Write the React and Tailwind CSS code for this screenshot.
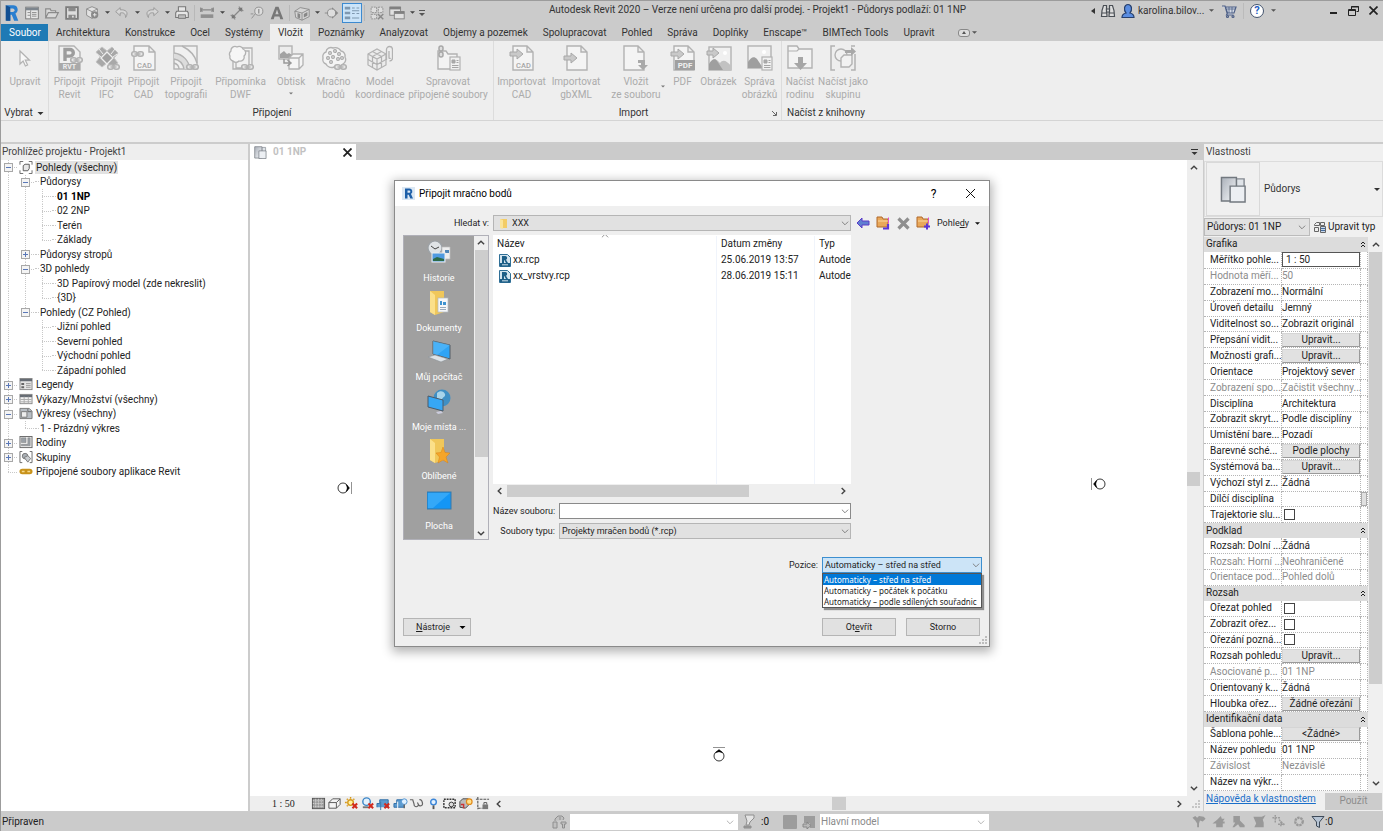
import React from "react";

const G = "#b2b2b2";

function Caret({ className = "w-[10px]", fill = "#555", w = 5 }) {
  return (
    <span className={`flex shrink-0 items-center justify-center ${className}`}>
      <svg width={w} height="3" viewBox="0 0 6 3" fill={fill} aria-hidden="true"><path d="M0 0h6L3 3z" /></svg>
    </span>
  );
}

function Chevron({ dir = "down", size = 8, color = "#444", sw = 1.2 }) {
  const d = { down: "M1 3l3.5 3.5L8 3", up: "M1 6l3.5-3.5L8 6", left: "M6 1L2.500 4.500 6 8", right: "M3 1l3.500 3.500L3 8" }[dir];
  return <svg width={size} height={size} viewBox="0 0 9 9" fill="none" stroke={color} strokeWidth={sw} aria-hidden="true"><path d={d} /></svg>;
}

function Chain({ x, y, c = G, s = 1 }) {
  return (
    <g transform={`translate(${x} ${y}) scale(${s})`} fill="#e6e6e6" stroke={c} strokeWidth="1.6">
      <rect x="0.7" y="0.8" width="5.6" height="4.4" rx="2.2" />
      <rect x="6.7" y="0.8" width="5.6" height="4.4" rx="2.2" />
      <path d="M3.500 3h6" strokeWidth="1.4" />
    </g>
  );
}

function Doc({ x = 5, y = 1, w = 17, h = 24 }) {
  return <path d={`M${x} ${y}h${w - 6}l6 6v${h - 6}h${-w}zM${x + w - 6} ${y}v6h6`} fill="#f4f4f4" stroke={G} strokeWidth="1.4" />;
}

const ARROW = "M1 7h7V4l6 5-6 5v-3H1z";

const ribbonArt = {
  cursor: <path d="M8 6v13l3.100-3 2.300 5 2.200-1-2.300-4.800h4.200z" fill="#f8f8f8" stroke={G} strokeWidth="1.200" />,
  revit: (
    <>
      <path d="M2 1h15l6 6v18H2z" fill="#f0f0f0" stroke={G} strokeWidth="1.400" />
      <path d="M2 18h21v7H2z" fill="#a9a9a9" />
      <path d="M8 16V4.500h5a3.300 3.300 0 0 1 0 6.600H8" fill="none" stroke="#9d9d9d" strokeWidth="3.400" />
      <text x="12.500" y="24.300" fontSize="7" fontWeight="700" fill="#eee" textAnchor="middle">RVT</text>
      <Chain x={13} y={12} />
    </>
  ),
  ifc: (
    <>
      <g fill="#a8a8a8" stroke="#c4c4c4" strokeWidth="1">
        <path d="M8 2l5 4 5-4 6 6-4 5 4 5-6 4-5-4-5 4-6-5 4-5-4-5z" />
        <path d="M13 7l6 6-6 6-6-6z" fill="#a0a0a0" stroke="#eee" strokeWidth="1.300" />
        <path d="M5 4l4 5M3 9l4 3M17 9l4-5M19 12l4-3" stroke="#eee" strokeWidth="1" />
      </g>
      <Chain x={13} y={19} />
    </>
  ),
  cadLink: (
    <>
      <Doc x={3} w={21} />
      <text x="13.500" y="23" fontSize="7.500" fontWeight="500" fill="#a6a6a6" textAnchor="middle">CAD</text>
      <Chain x={0} y={6} />
    </>
  ),
  topo: (
    <>
      <rect x="1" y="1" width="23" height="23" fill="#f0f0f0" stroke={G} strokeWidth="1.400" />
      <path d="M1 8c9 1 15 8 16 16h-6C10 19 7 15 1 14z" fill="#dcdcdc" />
      <path d="M1 8c9 1 15 8 16 16M1 14c6 1 9 5 10 10M9 1c8 4 13 9 15 17M1 18c3 1 5 3 5 6" fill="none" stroke={G} strokeWidth="1.400" />
      <Chain x={13} y={19} />
    </>
  ),
  dwf: (
    <>
      <path d="M8 3h16v20H8zM5 6h16v18H5z" fill="#f1f1f1" stroke={G} strokeWidth="1.300" />
      <path d="M3 6a4 4 0 0 1 6-4 4 4 0 0 1 6 2 4 4 0 0 1 1 7 4 4 0 0 1-5 5 4 4 0 0 1-6 0 4 4 0 0 1-3-5 4 4 0 0 1 1-5z" fill="#f6f6f6" stroke={G} strokeWidth="1.300" />
      <Chain x={13} y={19} />
    </>
  ),
  decal: (
    <>
      <rect x="1" y="1" width="13" height="13" fill="#ececec" stroke={G} strokeWidth="1.400" />
      <path d="M2 13V9l4-3 3 3 2-1 3 2v3z" fill="#a2a2a2" />
      <path d="M11 13l4-4h10v11l-4 4H11zM11 13h10v11M21 13l4-4" fill="#f5f5f5" stroke={G} strokeWidth="1.300" />
      <path d="M6 14v4h6M9.500 15l3.500 3-3.500 3" fill="none" stroke="#999" strokeWidth="1.500" />
    </>
  ),
  cloud: (
    <>
      <path d="M5 7a5 5 0 0 1 7-4 7 7 0 0 1 8 3 5 5 0 0 1 4 6 5 5 0 0 1-2 7 8 8 0 0 1-9 3 6 6 0 0 1-8-3 5 5 0 0 1-3-6 5 5 0 0 1 3-6z" fill="#f4f4f4" stroke={G} strokeWidth="1.400" />
      {[[9, 8], [14, 6], [18, 9], [7, 13], [12, 12], [17, 14], [21, 13], [10, 17]].map(([x, y]) => <circle key={`${x}-${y}`} cx={x} cy={y} r="1.400" fill="none" stroke="#a6a6a6" strokeWidth="1.200" />)}
      <Chain x={13} y={19} />
    </>
  ),
  model: (
    <>
      <g fill="#ececec" stroke={G} strokeWidth="1.200">
        <path d="M1 9l9-5 9 5v11l-9 5-9-5z" />
        <path d="M1 9l9 5 9-5M10 14v11M5.500 6.500l9 5M14.500 6.500l-9 5M5.500 11.500v11M14.500 11.500v11M1 14.500l9 5 9-5" fill="none" />
      </g>
      <path d="M22 6v7a1 1 0 0 0 1.500 0M19.500 15V4.500a3 3 0 0 1 6 0V13a3 3 0 0 1-3 3" fill="none" stroke={G} strokeWidth="1.300" />
    </>
  ),
  manage: (
    <>
      <path d="M3 6h8l2 3h9v15H3z" fill="#f3f3f3" stroke={G} strokeWidth="1.400" />
      <g fill="#ddd" stroke="#a8a8a8" strokeWidth="1.500"><rect x="4" y="1" width="4" height="5" rx="2" /><rect x="4" y="7" width="4" height="5" rx="2" /></g>
      <rect x="15" y="12" width="10" height="13" fill="#f0f0f0" stroke={G} strokeWidth="1.200" />
      <path d="M17 15h3v3h-3zM21.500 15.500h2M21.500 17.500h2M17 20.500h6.500M17 22.500h6.500" fill="#aaa" stroke="#a5a5a5" />
    </>
  ),
  cadImport: (
    <>
      <Doc x={4} w={20} />
      <text x="14.500" y="23" fontSize="7.500" fontWeight="500" fill="#a6a6a6" textAnchor="middle">CAD</text>
      <path d={ARROW} fill="#c9c9c9" stroke="#a8a8a8" />
    </>
  ),
  xmlImport: (<><Doc x={4} w={20} /><path d="M1 11h7V8l6 5-6 5v-3H1z" fill="#c9c9c9" stroke="#a8a8a8" /></>),
  fromFile: (<><Doc x={1} w={20} /><path d="M15 15h7v5h3l-5 5-5-5h3v-2h-3z" fill="#a9a9a9" /></>),
  pdf: (
    <>
      <Doc x={4} w={20} />
      <path d="M5 15h20v10H5z" fill="#a0a0a0" />
      <text x="15" y="23.200" fontSize="8" fontWeight="700" fill="#f0f0f0" textAnchor="middle">PDF</text>
      <path d={ARROW} fill="#c9c9c9" stroke="#a8a8a8" />
    </>
  ),
  image: (
    <>
      <rect x="3" y="2" width="22" height="23" fill="#f0f0f0" stroke={G} strokeWidth="1.400" />
      <path d="M3 25v-6c3-5 6-6 9-3l2 2c3-4 7-2 11 3v4z" fill="#c2c2c2" /><path d="M3 25v-6c3-5 6-6 8-3l6 9z" fill="#9f9f9f" />
      <circle cx="19" cy="8" r="2" fill="#fff" /><path d="M1 6h6V3l6 5-6 5v-3H1z" fill="#c9c9c9" stroke="#a8a8a8" />
    </>
  ),
  images: (
    <>
      <rect x="1" y="1" width="23" height="22" fill="#f0f0f0" stroke={G} strokeWidth="1.400" />
      <path d="M1 23v-6c3-5 6-6 9-3l6 9z" fill="#9f9f9f" /><circle cx="17" cy="7" r="2" fill="#fff" />
      <rect x="15" y="12" width="10" height="13" fill="#f0f0f0" stroke={G} strokeWidth="1.200" />
      <path d="M17 15h3v3h-3zM21.500 15.500h2M21.500 17.500h2M17 20.500h6.500M17 22.500h6.500" fill="#aaa" stroke="#a5a5a5" />
    </>
  ),
  family: (
    <>
      <path d="M1 23V1h9l2 3h13v19z" fill="#f3f3f3" stroke={G} strokeWidth="1.400" /><path d="M1 6h9l2-2" fill="none" stroke={G} strokeWidth="1.200" />
      <path d="M11 12h5v6h4l-6.500 7L7 18h4z" fill="#a6a6a6" />
    </>
  ),
  group: (
    <>
      <path d="M5 1H1v24h4M21 1h4M25 9v16h-4" fill="none" stroke={G} strokeWidth="1.500" />
      <circle cx="11" cy="10" r="6" fill="#f0f0f0" stroke={G} strokeWidth="1.400" />
      <path d="M11 13l3-3h8v9l-3 3h-8z" fill="#f2f2f2" stroke={G} strokeWidth="1.400" />
      <path d="M15 5h6V2l5 4.500-5 4.500V8h-6z" fill="#a8a8a8" />
    </>
  ),
};

const ribbonGroups = [
  { title: "Vybrat", caret: true, w: "w-[48px]", items: [["cursor", "Upravit", "", "w-[48px]"]] },
  {
    title: "Připojení", w: "w-[445px] pl-[2px]", items: [
      ["revit", "Připojit", "Revit", "w-[37px]"], ["ifc", "Připojit", "IFC", "w-[37px]"], ["cadLink", "Připojit", "CAD", "w-[37px]"],
      ["topo", "Připojit", "topografii", "w-[48px]"], ["dwf", "Připomínka", "DWF", "w-[61px]"], ["decal", "Obtisk", "▾", "w-[40px]"],
      ["cloud", "Mračno", "bodů", "w-[45px]"], ["model", "Model", "koordinace", "w-[48px]"], ["manage", "Spravovat", "připojené soubory", "w-[88px]"],
    ],
  },
  {
    title: "Import", launcher: true, w: "w-[288px]", items: [
      ["cadImport", "Importovat", "CAD", "w-[55px]"], ["xmlImport", "Importovat", "gbXML", "w-[54px]"], ["fromFile", "Vložit", "ze souboru", "w-[66px]", true],
      ["pdf", "PDF", "", "w-[27px]"], ["image", "Obrázek", "", "w-[45px]"], ["images", "Správa", "obrázků", "w-[37px]"],
    ],
  },
  { title: "Načíst z knihovny", w: "w-[88px]", last: true, items: [["family", "Načíst", "rodinu", "w-[36px]"], ["group", "Načíst jako", "skupinu", "w-[50px]"]] },
];

function RibbonItem({ item }) {
  const [art, l1, l2, w, side] = item;
  return (
    <button type="button" className={`relative flex shrink-0 flex-col items-center whitespace-nowrap text-[#ababab] ${w}`}>
      <svg width="26" height="26" viewBox="0 0 26 26" aria-hidden="true">{ribbonArt[art]}</svg>
      <span className="mt-1 leading-[13px]">{l1}</span>
      {l2 === "▾" ? <Caret className="mt-1 w-full" w={4} fill="#777" /> : <span className="leading-[13px]">{l2}</span>}
      {side && <span className="absolute top-10 right-1"><Caret className="w-1" w={4} fill="#777" /></span>}
    </button>
  );
}

const qatArt = {
  revit: (<><path d="M4 1.500h7.500a4.800 4.800 0 0 1 2.300 9L17 18.500h-4.600L9.700 12H8.300v6.500H4z" fill="#2a7fd0" /><path d="M8 5v4h2.800a2 2 0 0 0 0-4z" fill="#cbcbcb" /><path d="M3 1l5 2.500v15H3z" fill="#124f92" /></>),
  home: (<><rect x="3" y="3.500" width="14" height="13" fill="#e8e8e8" stroke="#777" /><path d="M3 4h14v3H3z" fill="#7d858d" /><path d="M5 9.500h3M5 12.500h3M10 9.500h5M10 11.500h5M10 13.500h5M8.500 7v9" stroke="#888" /></>),
  open: <path d="M3 15.500V5.500h5l1 2h5v2M3 15.500l3-6h11l-3 6z" fill="#d8d8d8" stroke="#8a8a8a" strokeWidth="1.300" />,
  save: (<><rect x="3.500" y="3.500" width="13" height="13" fill="#ddd" stroke="#7b7b7b" strokeWidth="2" /><path d="M6 4h8v4H6zM6 12h8v4H6z" fill="#8a8a8a" /><path d="M10 13h2v2h-2z" fill="#ddd" /></>),
  sync: (<><path d="M10 3l6 2.500v7L10 16l-6-3.500v-7z" fill="#e2e2e2" stroke="#8a8a8a" /><path d="M4 5.500l6 3 6-3M10 8.500V16" stroke="#8a8a8a" fill="none" /><circle cx="13" cy="12" r="4" fill="#888" /><path d="M11 12h4M13 10v4" stroke="#eee" /></>),
  undo: <path d="M8 4L3 8.500 8 13v-3c4-1 6 1 6 5 4-6 0-9-6-8.500z" fill="#d6d6d6" stroke="#959595" />,
  redo: <path d="M12 4l5 4.500-5 4.500v-3c-4-1-6 1-6 5-4-6 0-9 6-8.500z" fill="#d6d6d6" stroke="#959595" />,
  print: (<><path d="M6 8V3h8v5M4 8h12l1 2v5H3v-5z" fill="#e6e6e6" stroke="#777" strokeWidth="1.200" /><path d="M6 12h8v4H6z" fill="#bbb" stroke="#777" /></>),
  measure: (<><path d="M3 6.500h14M3 4v5M17 4v5M5 4.500L3 6.500l2 2M15 4.500l2 2-2 2" stroke="#888" strokeWidth="1.300" /><path d="M3 11.500h14v4H3z" fill="#8f8f8f" /></>),
  dim: (<><path d="M5 15L15 5M3 12l5 5M12 3l5 5" stroke="#888" strokeWidth="1.300" /><path d="M4 16l1-5 4 4zM16 4l-5 1 4 4z" fill="#777" /></>),
  tag: (<><circle cx="12" cy="8" r="4.500" fill="#ddd" stroke="#8d8d8d" /><path d="M8 11l-4 5M3 11h3" stroke="#8d8d8d" /><path d="M12 5.500v5" stroke="#888" strokeWidth="1.300" /></>),
  text: <path d="M3 17L8.300 3h3.400L17 17h-3.300l-1-3H7.300l-1 3zM8.200 11.300h3.600L10 6z" fill="#777" fillRule="evenodd" />,
  house: (<><path d="M2 8l6-4 10 2v8l-8 4-7-3z" fill="#d5d5d5" stroke="#8a8a8a" /><path d="M2 8l8 2 8-4M10 10v8" stroke="#8a8a8a" fill="none" /><path d="M5 10l3 1v5l-3-1zM12 11l4-2v4l-4 2z" fill="#888" /></>),
  section: (<><path d="M10 3.500l7 6.500-7 6.500z" fill="#888" /><circle cx="9.500" cy="10" r="4.500" fill="#ddd" stroke="#888" /><path d="M2 10h3" stroke="#888" /></>),
  thin: (<><path d="M2 4.500h6M2 10h6M2 15.500h6" stroke="#7f98b0" strokeWidth="3" /><path d="M10 4.500h3M15 4.500h3M10 7.500h8M10 10.500h3M15 10.500h3M10 15.500h8" stroke="#7f98b0" strokeWidth="1.200" /></>),
  closeViews: (<><path d="M3.500 3.500h6v6h-6zM11.500 3.500h5v6h-5zM3.500 11.500h6v5h-6z" fill="#ddd" stroke="#8f8f8f" strokeDasharray="2 1" /><path d="M11 11l6 6M17 11l-6 6" stroke="#8a8a8a" strokeWidth="1.600" /></>),
  switchW: (<><rect x="2" y="3.500" width="12" height="9" fill="#e0e0e0" stroke="#808080" /><path d="M2 3h12v3H2z" fill="#808080" /><rect x="7" y="8.500" width="11" height="8" fill="#e0e0e0" stroke="#808080" /><path d="M7 8h11v3H7z" fill="#808080" /></>),
};

const qat = ["revit", "home", "open", "save", "sync", "^", "undo", "^", "redo", "^", "print", "|", "measure", "^", "dim", "tag", "text", "|", "house", "^", "section", "thin", "|", "closeViews", "switchW", "^"];

function QuickAccess() {
  return (
    <div className="flex h-[22px] shrink-0 items-center pl-px">
      {qat.map((k, i) => {
        if (k === "^") return <Caret key={i} fill="#444" />;
        if (k === "|") return <span key={i} className="mx-0.5 h-4 w-px bg-[#b8b8b8]" />;
        return (
          <button key={i} type="button" aria-label={k} className={`flex size-5 items-center justify-center ${k === "thin" ? "border border-[#3d8ad0] bg-[#cbe4f9]" : ""}`}>
            <svg width="18" height="18" viewBox="0 0 20 20" fill="none" aria-hidden="true">{qatArt[k]}</svg>
          </button>
        );
      })}
      <span className="flex w-[10px] flex-col items-center gap-0.5"><i className="h-px w-[6px] bg-[#555]" /><Caret w={6} /></span>
    </div>
  );
}

function TitleBar() {
  return (
    <header className="flex h-[23px] items-center text-[#333]">
      <QuickAccess />
      <h1 className="mb-1.5 min-w-0 flex-1 text-center whitespace-nowrap">Autodesk Revit 2020 – Verze není určena pro další prodej. - Projekt1 - Půdorys podlaží: 01 1NP</h1>
      <div className="mb-1 flex w-[295px] shrink-0 items-center">
        <svg width="10" height="8" viewBox="0 0 10 8" aria-hidden="true"><path d="M7 1v6L3 4z" fill="#333" /></svg>
        <button type="button" aria-label="Hledat" className="flex w-5 justify-center">
          <svg width="16" height="16" viewBox="0 0 16 16" fill="#ddd" stroke="#4a4f55" strokeWidth="1.200" aria-hidden="true"><path d="M3.500 2.500h3v4l.5 7H1.500l.5-6zM9.500 2.500h3l1.500 5 .5 6H9l.5-7z" /><path d="M6.500 6h3v3h-3zM2 10h5M9 10h5" /></svg>
        </button>
        <button type="button" className="flex items-center">
          <svg width="20" height="16" viewBox="0 0 20 16" aria-hidden="true"><path d="M4 14.500c0-3 2-4 4-4.500C5.500 7 6 1.500 10 1.500s4.500 5.500 2 8.500c2 .5 4 1.500 4 4.500z" fill="#5b8de0" stroke="#27406e" strokeWidth="1.200" /></svg>
          <span className="w-[67px] text-left">karolina.bilov...</span><Caret className="w-3" />
        </button>
        <button type="button" aria-label="Košík" className="flex w-6 justify-center">
          <svg width="16" height="16" viewBox="0 0 16 16" fill="none" stroke="#4d5f86" strokeWidth="1.200" aria-hidden="true"><path d="M1 3h3l2 7h7l2-6H4.500l2 6-1 2h7" fill="#d7dde8" /><path d="M6 6h8M8 4v6M11 4v6" strokeWidth=".8" /><circle cx="6.500" cy="13.500" r="1" /><circle cx="12" cy="13.500" r="1" /></svg>
        </button>
        <span className="mx-0.5 h-4 w-px bg-[#bbb]" />
        <button type="button" aria-label="Nápověda" className="flex items-center">
          <span className="mx-1 flex size-[14px] items-center justify-center rounded-full border border-[#44546e] bg-white text-[11px] leading-none font-bold text-[#1f5fc4]">?</span><Caret />
        </button>
        <div className="ml-auto flex">
          <button type="button" aria-label="Minimalizovat" className="flex size-5 items-center justify-center"><svg width="8" height="8" aria-hidden="true"><path d="M1 6h7" stroke="#222" strokeWidth="2" /></svg></button>
          <button type="button" aria-label="Obnovit" className="flex size-5 items-center justify-center"><svg width="11" height="10" viewBox="0 0 11 10" fill="none" stroke="#222" aria-hidden="true"><path d="M3.500 3V.5h7v5h-2M3 1h8" /><path d="M.5 3.500h7v6h-7zM.5 4.500h7" /></svg></button>
          <button type="button" aria-label="Zavřít" className="flex size-5 items-center justify-center"><svg width="9" height="9" viewBox="0 0 9 9" stroke="#222" strokeWidth="1.700" aria-hidden="true"><path d="M.5.5l8 8M8.500.5l-8 8" /></svg></button>
        </div>
      </div>
    </header>
  );
}

const tabs = ["Soubor", "Architektura", "Konstrukce", "Ocel", "Systémy", "Vložit", "Poznámky", "Analyzovat", "Objemy a pozemek", "Spolupracovat", "Pohled", "Správa", "Doplňky", "Enscape™", "BIMTech Tools", "Upravit"];

function Tabs() {
  return (
    <nav className="flex h-[17px] items-stretch">
      {tabs.map((t) => (
        <button key={t} type="button" className={`pr-[7px] pl-2 whitespace-nowrap ${t === "Soubor" ? "bg-[#1f7ab5] text-white" : t === "Vložit" ? "bg-[#eeeeee] text-[#333]" : "text-[#333]"}`}>{t}</button>
      ))}
      <button type="button" aria-label="Pás karet" className="ml-4 flex items-center">
        <span className="flex h-2 w-3 items-center justify-center rounded-[3px] border border-[#888] bg-[#ddd]"><svg width="4" height="3" aria-hidden="true"><path d="M0 3h4L2 0z" fill="#555" /></svg></span><Caret />
      </button>
    </nav>
  );
}

function Ribbon() {
  return (
    <section className="flex h-[80px] shrink-0 border-b border-[#d4d4d4] bg-[#eeeeee]">
      {ribbonGroups.map((g) => (
        <div key={g.title} className={`flex shrink-0 flex-col justify-between pt-1 ${g.w} ${g.last ? "" : "border-r border-[#dcdcdc]"}`}>
          <div className="flex">{g.items.map((it) => <RibbonItem key={it[1] + it[2]} item={it} />)}</div>
          <div className={`relative flex items-center justify-center whitespace-nowrap leading-[14px] text-[#333] ${g.launcher ? "pr-2" : ""}`}>
            {g.title}{g.caret && <Caret className="ml-1 w-2" w={7} fill="#333" />}
            {g.launcher && <svg className="absolute right-1" width="5" height="5" viewBox="0 0 5 5" fill="none" stroke="#666" aria-hidden="true"><path d="M0 0l4 4M4.500 1v3.500H1" /></svg>}
          </div>
        </div>
      ))}
    </section>
  );
}

const treeArt = {
  views: (<><path d="M4 .5H.5V4M10 .5h3.500V4M4 13.500H.5V10M10 13.500h3.500V10" stroke="#666" /><path d="M4 5l2-1.500h4.500V8L9 10.500H4z" fill="#e8e8e8" stroke="#555" /></>),
  legend: (<><rect x=".5" y=".5" width="13" height="12" fill="#e3e3e3" stroke="#888" /><path d="M.5 1h13v2.500H.5z" fill="#666c74" /><path d="M2 5.500h3v2H2zM2 9h3v2H2z" fill="#666" /><path d="M7 6h5M7 8h5M7 10h5" stroke="#999" /></>),
  schedule: (<><rect x=".5" y="1.500" width="13" height="10" fill="#f1f1f1" stroke="#888" /><path d="M.5 2h13v2.500H.5z" fill="#666c74" /><path d="M1 7h12M1 9.500h12M5 4v7M9.500 4v7" stroke="#aaa" /></>),
  sheet: (<><path d="M.5 1.500h10l3 3v8H.5z" fill="#b8bec4" stroke="#777" /><path d="M2 5h6v6H2z" fill="#eee" stroke="#777" /><path d="M9 2v3h4" stroke="#666" /></>),
  family: (<><rect x=".5" y=".5" width="13" height="12" fill="#eee" stroke="#666" /><path d="M2 2h5v5H2zM9 2h2.500v8.500H2V9h7z" fill="#9aa0a6" stroke="#777" strokeWidth=".5" /></>),
  groups: (<><path d="M3 .5H.5v12H3M11 .5h2.500v12H11" stroke="#666" /><circle cx="6" cy="5.500" r="3" fill="#a9afb5" stroke="#777" /><path d="M5 7l4-2 3 3-3 4z" fill="#c8ccd0" stroke="#777" /></>),
  links: (<><rect x="0" y="4" width="14" height="6" rx="3" fill="#c8921a" /><path d="M2.500 7h3M8.500 7h3" stroke="#f5d98d" strokeWidth="1.400" /></>),
};

const tree = [
  ["-", "Pohledy (všechny)", "views"], ["F-", "Půdorysy"], ["FFT", "01 1NP"], ["FFT", "02 2NP"], ["FFT", "Terén"], ["FFL", "Základy"],
  ["F+", "Půdorysy stropů"], ["F-", "3D pohledy"], ["FFT", "3D Papírový model (zde nekreslit)"], ["FFL", "{3D}"], ["Fm", "Pohledy (CZ Pohled)"],
  ["F T", "Jižní pohled"], ["F T", "Severní pohled"], ["F T", "Východní pohled"], ["F L", "Západní pohled"],
  ["+", "Legendy", "legend"], ["+", "Výkazy/Množství (všechny)", "schedule"], ["-", "Výkresy (všechny)", "sheet"], ["FL", "1 - Prázdný výkres"],
  ["+", "Rodiny", "family"], ["+", "Skupiny", "groups"], ["L", "Připojené soubory aplikace Revit", "links"],
];

function Guide({ code }) {
  const box = "+-m".includes(code);
  const half = code === "L" || code === "m";
  return (
    <svg className="h-full w-[17px] shrink-0" aria-hidden="true">
      {code !== " " && <line x1="7.5" x2="7.5" y1="0" y2={half ? "50%" : "100%"} stroke="#c8c8c8" strokeDasharray="1 1" />}
      {code !== " " && code !== "F" && <line x1="7" x2="17" y1="7.5" y2="7.5" stroke="#c8c8c8" strokeDasharray="1 1" />}
      {box && <rect x="3.5" y="3.5" width="8" height="8" fill="#f4f4f4" stroke="#a8a8a8" />}
      {box && <path d={code === "+" ? "M5 7.5h5M7.500 5v5" : "M5 7.5h5"} stroke="#5a78b8" />}
    </svg>
  );
}

function Browser() {
  return (
    <aside className="flex w-[249px] shrink-0 flex-col border-r-2 border-[#cccccc] bg-white">
      <h2 className="h-4 bg-[#eeeeee] pl-px leading-4 text-[#444]">Prohlížeč projektu - Projekt1</h2>
      <ul className="grid h-[319px] auto-rows-fr text-[#222]">
        {tree.map(([codes, label, icon], i) => (
          <li key={i} className="flex min-h-0 items-center">
            {codes.split("").map((c, j) => <Guide key={j} code={c} />)}
            {icon && <svg className="mr-0.5 ml-px shrink-0" width="14" height="13" viewBox="0 0 14 14" fill="none" aria-hidden="true">{treeArt[icon]}</svg>}
            {!icon && <span className="w-1 border-t border-dotted border-[#c8c8c8]" />}
            <span className={`whitespace-nowrap px-px leading-[13px] ${i === 0 ? "bg-[#e2e2e2]" : ""} ${i === 2 ? "font-bold text-black" : ""}`}>{label}</span>
          </li>
        ))}
      </ul>
    </aside>
  );
}

function PlanIcon({ size = 14 }) {
  return (
    <svg width={size} height={size} viewBox="0 0 28 28" aria-hidden="true">
      <defs><linearGradient id="pl" x1="0" y1="0" x2="1" y2="1"><stop offset="0" stopColor="#aab0b9" /><stop offset="1" stopColor="#f6f8fa" /></linearGradient></defs>
      <path d="M17 3h8v10h-8z" fill="#dfe3e8" stroke="#858b92" strokeWidth="1.500" />
      <path d="M1.500 1.500H17V26H1.500z" fill="url(#pl)" stroke="#72787f" strokeWidth="1.500" />
      <path d="M10.500 10.500H26V27H10.500z" fill="#eceff3" stroke="#72787f" strokeWidth="1.500" />
    </svg>
  );
}

function Marker({ className, rot }) {
  return (
    <svg className={`absolute ${className}`} width="16" height="16" viewBox="0 0 16 16" aria-hidden="true">
      <g transform={`rotate(${rot} 8 8)`}>
        <circle cx="8" cy="9" r="5" fill="#fff" stroke="#222" strokeWidth=".9" /><path d="M4.500 5.700L8 2.500l3.500 3.200L8 4.700z" fill="#000" stroke="#000" strokeWidth=".5" />
        <path d="M2 .5h12" stroke="#777" strokeWidth=".8" />
      </g>
    </svg>
  );
}

const X = <path d="M9 8l5 5M14 8l-5 5" stroke="#d02a1e" strokeWidth="2.200" />;
const viewArt = [
  <><rect x="1.5" y="2.500" width="13" height="11" fill="#9a9a9a" stroke="#555" /><path d="M2 5h12M2 8h12M2 11h12M5 3v10M8 3v10M11 3v10" stroke="#ddd" strokeDasharray="1 1" /></>,
  <path d="M2 7l4-4h8v6l-4 4H2zM2 7h8v6M10 7l4-4" fill="#f4f4f4" stroke="#555" />,
  <><circle cx="7" cy="7" r="3" fill="#fff3a0" stroke="#d79a1c" strokeWidth="1.500" /><path d="M7 1v2M1 7h2M3 3l1 1M11 3l-1 1M3 11l1-1" stroke="#d79a1c" strokeWidth="1.500" />{X}</>,
  <><circle cx="7" cy="6" r="4" fill="#e4f1fb" stroke="#3c86c8" strokeWidth="1.500" /><path d="M3 12h6" stroke="#777" strokeWidth="2" />{X}</>,
  <><path d="M1 12V8h3V4h9v8H9" fill="#5b9bd0" stroke="#2f6ea8" /><path d="M5 6v9" stroke="#3f78a8" />{X}</>,
  <><path d="M1 12V8h3V4h8v8z" fill="#5b9bd0" stroke="#2f6ea8" /><path d="M5 6v9" stroke="#fff" /><circle cx="12" cy="6" r="3" fill="#dff0ff" stroke="#4a90d0" /><path d="M12 9v4" stroke="#666" strokeWidth="1.500" /></>,
  <path d="M1 4h3l1.500 5M5.500 8.500a2.300 2.300 0 1 0 4.500.5 2.200 2.200 0 1 0 4.300-1.500C14 5 13 3.500 11 4M10 9L9 7" fill="none" stroke="#666" strokeWidth="1.300" />,
  <><circle cx="8" cy="6.500" r="3" fill="#e4f2ff" stroke="#3c86d8" strokeWidth="1.500" /><path d="M8 10v4" stroke="#555" strokeWidth="2" /></>,
  <><rect x="2" y="3.500" width="12" height="9" fill="#f0f0f0" stroke="#333" strokeWidth="1.500" strokeDasharray="2 1" /><circle cx="10" cy="9" r="2.500" fill="#ddd" stroke="#333" /></>,
  <><path d="M2 12V6l3-3h6v7l-3 3z" fill="#bbb" stroke="#444" /><path d="M3 9h3v4" stroke="#c33" strokeWidth="1.500" fill="none" /><circle cx="12" cy="6" r="3" fill="#ffe08a" stroke="#e08a1c" strokeWidth="1.300" /></>,
  <><path d="M1 3.500h14M3 1v13M3 13h5" stroke="#555" strokeWidth="1.200" strokeDasharray="3 1" /><rect x="8" y="9" width="6" height="5" fill="#777" /><path d="M9.500 9V7h3v2" stroke="#555" fill="none" /></>,
];

function Viewport() {
  return (
    <main className="flex min-w-0 flex-1 flex-col">
      <div className="flex h-4 items-stretch bg-[#cbcbcb]">
        <div className="flex w-[106px] items-center bg-white pl-1">
          <PlanIcon size={13} /><span className="ml-1.5 flex-1 font-bold text-[#c2c2c2]">01 1NP</span>
          <button type="button" aria-label="Zavřít pohled" className="flex w-[18px] justify-center"><svg width="9" height="9" viewBox="0 0 9 9" stroke="#222" strokeWidth="1.800" aria-hidden="true"><path d="M.5.5l8 8M8.500.5l-8 8" /></svg></button>
        </div>
        <span className="ml-auto flex w-[18px] flex-col items-center justify-center gap-0.5"><i className="h-px w-[7px] bg-[#333]" /><Caret w={7} fill="#333" /></span>
      </div>
      <div className="flex min-h-0 flex-1">
        <div className="relative min-w-0 flex-1 bg-white">
          <Marker className="top-[320px] left-[86px]" rot={90} />
          <Marker className="top-[316px] left-[841px]" rot={-90} />
          <Marker className="top-[587px] left-[461px]" rot={0} />
        </div>
        <div className="flex w-[13px] flex-col items-center bg-[#eeeeee]">
          <div className="flex h-[312px] items-start pt-1"><Chevron dir="up" sw={1.600} /></div>
          <div className="h-[14px] w-full bg-[#cdcdcd]" />
          <div className="mt-auto pb-1"><Chevron dir="down" sw={1.600} /></div>
        </div>
        <div className="w-[3px] bg-[#eeeeee]" />
      </div>
      <div className="flex h-[15px] items-center bg-[#eeeeee]">
        <span className="w-[61px] pl-[22px] font-['Liberation_Serif',serif] font-medium">1 : 50</span>
        <div className="grid w-[180px] grid-cols-11">
          {viewArt.map((a, i) => <button key={i} type="button" aria-label={`Ovládání pohledu ${i + 1}`}><svg width="15" height="15" viewBox="0 0 16 16" fill="none" aria-hidden="true">{a}</svg></button>)}
        </div>
        <span className="ml-1"><Chevron dir="left" sw={1.600} /></span>
        <div className="ml-[329px] h-[13px] w-[14px] bg-[#cdcdcd]" />
        <span className="ml-auto"><Chevron dir="right" sw={1.600} /></span>
        <svg className="mr-0.5 ml-2" width="10" height="10" viewBox="0 0 10 10" aria-hidden="true"><path d="M7 1h2v2H7zM4 4h2v2H4zM7 4h2v2H7zM1 7h2v2H1zM4 7h2v2H4zM7 7h2v2H7z" fill="#c6c6c6" /></svg>
      </div>
    </main>
  );
}

const props = [
  ["#", "Grafika"], ["scale", "Měřítko pohle...", "1 : 50"], ["dis", "Hodnota měří...", "50"], ["", "Zobrazení mo...", "Normální"], ["", "Úroveň detailu", "Jemný"],
  ["", "Viditelnost so...", "Zobrazit originál"], ["btn", "Přepsání vidit...", "Upravit..."], ["btn", "Možnosti grafi...", "Upravit..."], ["", "Orientace", "Projektový sever"],
  ["dis", "Zobrazení spo...", "Začistit všechny..."], ["", "Disciplína", "Architektura"], ["", "Zobrazit skryt...", "Podle disciplíny"], ["", "Umístění bare...", "Pozadí"],
  ["btn", "Barevné sché...", "Podle plochy"], ["btn", "Systémová ba...", "Upravit..."], ["", "Výchozí styl z...", "Žádná"], ["more", "Dílčí disciplína", ""], ["chk", "Trajektorie slu..."],
  ["#", "Podklad"], ["", "Rozsah: Dolní ...", "Žádná"], ["dis", "Rozsah: Horní ...", "Neohraničené"], ["dis", "Orientace pod...", "Pohled dolů"],
  ["#", "Rozsah"], ["chk", "Ořezat pohled"], ["chk", "Zobrazit ořez..."], ["chk", "Ořezání pozná..."], ["btn", "Rozsah pohledu", "Upravit..."],
  ["dis", "Asociované p...", "01 1NP"], ["", "Orientovaný k...", "Žádná"], ["btn", "Hloubka ořez...", "Žádné ořezání"],
  ["#", "Identifikační data"], ["btn", "Šablona pohle...", "<Žádné>"], ["", "Název pohledu", "01 1NP"], ["dis", "Závislost", "Nezávislé"], ["", "Název na výkr...", ""],
];

function PropValue({ kind, value, label }) {
  if (kind === "btn") return <button type="button" className="block h-[14px] w-full border border-[#d5d5d5] border-r-[#9a9a9a] border-b-[#9a9a9a] bg-[#e1e1e1] text-center leading-3">{value}</button>;
  if (kind === "chk") return <input type="checkbox" aria-label={label} className="ml-0.5 block size-[11px] appearance-none border border-[#444] bg-white" />;
  if (kind === "scale") return <input aria-label={label} defaultValue={value} className="block h-[15px] w-full border border-[#555] bg-white pl-[3px]" />;
  return <span className="block whitespace-nowrap">{value}</span>;
}

function Properties() {
  return (
    <aside className="flex w-[180px] shrink-0 flex-col border-l border-[#cccccc] bg-[#f0f0f0] text-[#1e1e1e]">
      <h2 className="h-[17px] pl-0.5 leading-4 text-[#444]">Vlastnosti</h2>
      <button type="button" className="flex h-14 shrink-0 items-center border border-[#dcdcdc] text-left">
        <span className="mr-1 ml-px flex size-[54px] items-center justify-center border border-[#d9d9d9]"><PlanIcon size={27} /></span>
        <span className="flex-1 text-[#333]">Půdorys</span><Caret w={6} fill="#333" />
      </button>
      <div className="flex h-5 shrink-0 items-center">
        <div className="relative flex items-center">
          <select aria-label="Instance" className="h-[18px] w-[106px] appearance-none border border-[#bbb] bg-[#e1e1e1] pl-0.5"><option>Půdorys: 01 1NP</option></select>
          <span className="pointer-events-none absolute right-1"><Chevron color="#777" sw={1} /></span>
        </div>
        <button type="button" className="ml-1 flex items-center gap-0.5 whitespace-nowrap">
          <svg width="12" height="12" viewBox="0 0 12 12" fill="#eee" stroke="#666" aria-hidden="true"><path d="M.5 3.500l2-2h3v3h-5zM6.500 1.500h4v3h-4zM.5 6.500h4v4h-4z" /><path d="M6.500 5.500h5v6h-5z" fill="#c8d8ea" /><path d="M7 7.500h4M7 9.500h4" stroke="#456a9c" /></svg>
          Upravit typ
        </button>
      </div>
      <div className="flex min-h-0 flex-1 overflow-hidden">
        <table className="h-[554px] w-[164px] table-fixed border-separate border-spacing-0 bg-white">
          <colgroup><col className="w-[78px]" /><col className="w-[78px]" /><col className="w-[8px]" /></colgroup>
          <tbody>
            {props.map(([kind, label, value], i) => kind === "#" ? (
              <tr key={i}><th colSpan={3} className="bg-[#dcdcdc] p-0 pr-0.5 pl-0.5 font-normal">
                <div className="flex items-center justify-between leading-[14px]">{label}
                  <svg width="6" height="7" viewBox="0 0 6 7" fill="none" stroke="#222" aria-hidden="true"><path d="M1 3l2-2 2 2M1 6l2-2 2 2" /></svg></div>
              </th></tr>
            ) : (
              <tr key={i} className={kind === "dis" ? "text-[#8c8c8c]" : ""}>
                <td className="border-r border-b border-dotted border-[#b5b5b5] p-0 pl-1.5 leading-[14px] whitespace-nowrap">{label}</td>
                <td className="border-b border-dotted border-[#b5b5b5] p-0 leading-[14px]"><PropValue kind={kind} value={value} label={label} /></td>
                <td className="border-x border-b border-dotted border-[#b5b5b5] p-0">{kind === "more" && <button type="button" aria-label="Procházet" className="block h-[14px] w-full border border-[#aaa] bg-[#e1e1e1]" />}</td>
              </tr>
            ))}
          </tbody>
        </table>
        <div className="flex flex-1 flex-col items-center">
          <div className="flex h-[15px] items-center"><Chevron dir="up" sw={1.600} /></div>
          <div className="h-[432px] w-[13px] bg-[#cdcdcd]" />
          <div className="mt-auto pb-1"><Chevron dir="down" sw={1.600} /></div>
        </div>
      </div>
      <div className="flex h-5 shrink-0 items-center justify-between pr-px pl-0.5">
        <a href="#napoveda" className="mb-1 whitespace-nowrap text-[#1a6fc9] underline">Nápověda k vlastnostem</a>
        <button type="button" disabled className="h-[17px] w-[57px] bg-[#cccccc] text-[#8c8c8c]">Použít</button>
      </div>
    </aside>
  );
}

const statusArt = [
  <path d="M1 4l3-2 2 2 2-2 5 1 2 2-3 3-3-1-1 3v4H6v-4L4 7z" />, <path d="M1 10l5-4 4-4 1 3h3l-2 3h2v2h-2v4H5v-4z" />, <path d="M2 2h7v5l5 5v2H9l-2-3-4 3H1l3-5H2z" />,
  <path d="M2 3h9l4-2-3 5 1 3v5H3l2-4z" />, <path d="M4 1v9M1 4h8M10 8v6M7 11h7M8 6l6 6" stroke="#999" fill="none" strokeDasharray="2 1" strokeWidth="1.500" />,
  <circle cx="8" cy="8" r="4" fill="none" stroke="#999" strokeWidth="2.500" strokeDasharray="2.500 .8" />,
];

function StatusBar() {
  return (
    <footer className="flex h-[19px] shrink-0 items-center bg-[#cbcbcb] text-[#222]">
      <span className="w-[550px] pl-px">Připraven</span>
      <svg width="18" height="16" viewBox="0 0 18 16" fill="#c0c0c0" stroke="#8e8e8e" aria-hidden="true"><path d="M2 8h4v6H2zM4 7V5l3-3h4l2 2-1 2M9 3v3M10 8h5v2h-1.500v4h-2v-4H10z" /></svg>
      <div className="relative ml-px flex items-center">
        <select aria-label="Pracovní sada" className="h-4 w-[168px] appearance-none bg-white pl-1"><option></option></select>
        <span className="pointer-events-none absolute right-1"><Chevron color="#aaa" sw={1} /></span>
      </div>
      <svg className="ml-1" width="14" height="15" viewBox="0 0 14 15" fill="#e4e4e4" stroke="#8e8e8e" aria-hidden="true"><path d="M3 1h9v3L8 8l-1 3H4l1-4z" /><path d="M2 12h7v2H2z" fill="#999" /></svg>
      <span className="ml-[5px] w-[22px] text-[#111]">:0</span>
      <span className="size-[14px] rounded-[1px] bg-[#9c9c9c]" />
      <svg className="ml-[5px]" width="14" height="14" viewBox="0 0 14 14" aria-hidden="true"><path d="M2 1h11v12H8V8H2z" fill="#9c9c9c" /><path d="M1 9h4V7l4 3.500L5 14v-2H1z" fill="#b8b8b8" stroke="#888" /></svg>
      <div className="relative ml-1 flex items-center">
        <select aria-label="Model" className="h-4 w-[169px] appearance-none bg-white pl-px text-[#8a8a8a]"><option>Hlavní model</option></select>
        <span className="pointer-events-none absolute right-1"><Chevron color="#aaa" sw={1} /></span>
      </div>
      <div className="mr-[50px] ml-auto flex items-center gap-1">
        {statusArt.map((a, i) => <svg key={i} width="16" height="15" viewBox="0 0 16 16" fill="#999" aria-hidden="true">{a}</svg>)}
        <span className="flex items-center"><svg width="14" height="14" viewBox="0 0 14 14" fill="#b6c4d4" stroke="#3e4a58" aria-hidden="true"><path d="M1 1.500h12L8.500 7v5.500l-3-1.500V7z" /></svg>:0</span>
      </div>
    </footer>
  );
}

const BACKFOLDER = <path d="M3 1h14v21l-9 3-5-3z" fill="#f0c75a" />;
const places = [
  ["Historie", <><circle cx="8" cy="8" r="7" fill="#dfe3e6" stroke="#9aa0a5" strokeWidth="1.200" /><path d="M4 6l4 3 4-2" stroke="#444" fill="none" /><path d="M15 7h8v12h-8z" fill="#eee" stroke="#bbb" strokeWidth=".7" /><path d="M18 10h4v3h-4z" fill="#4f86b8" /><rect x="5" y="13" width="13" height="9" fill="#4f9ae0" stroke="#eee" /><path d="M6 19l4-2 7 2v2H6z" fill="#2c6a48" /></>],
  ["Dokumenty", <>{BACKFOLDER}<path d="M3 1l5 4v20l-5-3z" fill="#fbe08a" /><rect x="11" y="8" width="10" height="14" fill="#f5f7f9" stroke="#b4bac0" strokeWidth=".7" /><path d="M13 15v-4h2v4zM16 15v-3h3v3z" fill="#3f93d0" /><path d="M13 17.500h6M13 19.500h6" stroke="#9ab" /></>],
  ["Můj počítač", <><path d="M6 2l17 4v14L6 15z" fill="#2fa4f5" stroke="#555c64" strokeWidth="1" /><path d="M6 2l17 4L10 16l-4-1z" fill="#5cbcfa" opacity=".6" /><path d="M1 18l7-2 13 4-7 3z" fill="#dde2e6" stroke="#8a9096" strokeWidth=".6" /></>],
  ["Moje místa ...", <><circle cx="15" cy="9" r="8.500" fill="#3f8fc4" /><path d="M10 4c3-3 7-2 8 1s-3 3-3 6-4 0-5-2z" fill="#a8d4ea" /><path d="M1 7l15 4v11L1 18z" fill="#36a7f5" stroke="#4c5a68" /><path d="M9 23l5-1 2 2-5 1z" fill="#ccd" /></>],
  ["Oblíbené", <>{BACKFOLDER}<path d="M3 1l5 4v20l-5-3z" fill="#fbe08a" /><path d="M16 9l2 5.500 5 .5-4 4 2 6-5-3-5 3 1.500-6-3.500-4 5-.5z" fill="#f5a52a" stroke="#d98312" strokeWidth=".5" /></>],
  ["Plocha", <><rect x="0" y="4" width="24" height="17" fill="#1496f5" stroke="#3678a8" /><path d="M1 5h22L6 20H1z" fill="#4ab4fa" opacity=".6" /></>],
];

const files = [["xx.rcp", "25.06.2019 13:57"], ["xx_vrstvy.rcp", "28.06.2019 15:11"]];

function FolderTool({ arrow }) {
  return (
    <svg width="14" height="14" viewBox="0 0 14 14" aria-hidden="true">
      <path d="M1 3V1h5l1 2h5v8H1z" fill="#e9a85a" stroke="#b0682a" /><path d="M2 5h10" stroke="#fbd9a0" />
      <path d="M12.500 1.500v6" stroke="#e14fd0" strokeWidth="1" />
      {arrow ? <path d="M7 12.500h5V8" stroke="#5a35d8" strokeWidth="2.200" fill="none" /> : <path d="M11 7.500v6M8 10.500h6" stroke="#5a35d8" strokeWidth="2" />}
    </svg>
  );
}

function Combo({ id, className, children, chevron = "#777", boxClass = "" }) {
  return (
    <div className={`relative flex items-center ${boxClass}`}>
      <select id={id} className={`h-4 w-full appearance-none border outline-none ${className}`}>{children}</select>
      <span className="pointer-events-none absolute right-0.5"><Chevron color={chevron} sw={1} /></span>
    </div>
  );
}

const SMALL = "text-[9px] [font-family:Roboto,'Noto_Sans',sans-serif]";

function Dialog() {
  return (
    <div role="dialog" aria-label="Připojit mračno bodů" className="absolute top-[179px] left-[393px] flex w-[596px] flex-col border border-[#8a8a8a] bg-[#efefef] text-[#1e1e1e] shadow-[0_3px_10px_2px_rgba(0,0,0,0.3)]">
      <div className="flex h-[25px] items-center bg-white pl-[7px] text-black">
        <svg width="13" height="13" viewBox="0 0 13 13" aria-hidden="true"><rect width="13" height="13" fill="#dce8f4" /><path d="M3 1.500h4.500a3 3 0 0 1 1.500 5.500l2 4.500H8.300L6.700 7.700H5.500v3.800H3zM5.500 3.500v2.300h1.700a1.100 1.100 0 0 0 0-2.300z" fill="#1d5fa8" fillRule="evenodd" /></svg>
        <h2 className="ml-1 flex-1">Připojit mračno bodů</h2>
        <button type="button" aria-label="Nápověda k dialogu" className="w-[37px] text-[12px]">?</button>
        <button type="button" aria-label="Zavřít dialog" className="flex w-[37px] justify-center"><svg width="9" height="9" viewBox="0 0 9 9" stroke="#111" aria-hidden="true"><path d="M0 0l9 9M9 0L0 9" /></svg></button>
      </div>
      <div className={`flex flex-col pt-2 pr-[7px] pb-[10px] pl-2 ${SMALL}`}>
        <div className="flex h-[18px] items-center">
          <label htmlFor="look" className="w-[90px] shrink-0 pr-1 text-right">Hledat v:</label>
          <div className="relative flex w-[358px] shrink-0 items-center">
            <Combo id="look" boxClass="w-full" className="border-[#b5b5b5] bg-[#e1e1e1] pl-[18px]"><option>XXX</option></Combo>
            <svg className="pointer-events-none absolute left-1.5" width="9" height="11" viewBox="0 0 9 11" aria-hidden="true"><path d="M1 1h7v9H1z" fill="#f3cc66" /><path d="M1 1l3 1v9l-3-1z" fill="#fbe49a" /></svg>
          </div>
          <div className="ml-0.5 flex shrink-0 items-center">
            <button type="button" aria-label="Zpět" className="flex w-5 justify-center"><svg width="14" height="12" viewBox="0 0 14 12" aria-hidden="true"><path d="M1 6l5-5v3h7v4H6v3z" fill="#5f7fd0" stroke="#5a3ac8" /></svg></button>
            <button type="button" aria-label="O úroveň výš" className="flex w-5 justify-center"><FolderTool arrow /></button>
            <button type="button" aria-label="Odstranit" className="flex w-5 justify-center"><svg width="13" height="13" viewBox="0 0 13 13" stroke="#8e8e8e" strokeWidth="3.200" aria-hidden="true"><path d="M1.500 1.500l10 10M11.500 1.500l-10 10" /></svg></button>
            <button type="button" aria-label="Nová složka" className="flex w-5 justify-center"><FolderTool /></button>
            <button type="button" className="ml-1 flex items-center">Pohle<u>d</u>y<Caret className="ml-1 w-2" w={5} fill="#111" /></button>
          </div>
        </div>
        <div className="mt-[3px] flex gap-1">
          <div className="flex h-[305px] w-[86px] shrink-0 border border-[#b0b0b8] bg-[#a0a0a0]">
            <ul className="grid flex-1 auto-rows-fr pb-[6px]">
              {places.map(([name, art]) => (
                <li key={name} className="min-h-0">
                  <button type="button" className="flex w-full flex-col items-center pt-1 whitespace-nowrap text-white"><svg width="25" height="26" viewBox="0 0 25 26" aria-hidden="true">{art}</svg><span className="mt-1.5 leading-3">{name}</span></button>
                </li>
              ))}
            </ul>
            <div className="flex w-[14px] flex-col items-center bg-[#efefef]">
              <div className="flex h-[14px] items-center"><Chevron dir="up" sw={1.600} size={8} /></div><div className="h-[207px] w-[13px] bg-[#cdcdcd]" />
              <div className="mt-auto pb-0.5"><Chevron dir="down" sw={1.600} size={8} /></div>
            </div>
          </div>
          <div className="flex w-[358px] flex-col">
            <div className="h-[249px] overflow-hidden bg-white pt-px text-[10px]">
              <table className="h-full w-full table-fixed border-separate border-spacing-0 text-left text-[#222]">
                <colgroup><col className="w-[224px]" /><col className="w-[98px]" /><col /></colgroup>
                <thead><tr className="h-4">
                  <th className="relative border-r border-[#f0f4fb] p-0 pl-1 font-normal">Název<span className="absolute top-[-4px] left-[108px]"><Chevron dir="up" color="#888" sw={1} size={8} /></span></th>
                  <th className="border-r border-[#f0f4fb] p-0 pl-1 font-normal">Datum změny</th><th className="p-0 pl-1 font-normal">Typ</th>
                </tr></thead>
                <tbody>
                  {files.map(([n, d]) => (
                    <tr key={n} className="h-4">
                      <td className="border-r border-[#f0f4fb] p-0 pl-1.5"><span className="flex items-center gap-0.5">
                        <svg width="12" height="13" viewBox="0 0 12 13" aria-hidden="true"><path d="M.5.5h8l3 3v9H.5z" fill="#d4e4ee" stroke="#2f6f96" /><path d="M1 9h10v3.500H1z" fill="#1d5e86" /><path d="M3 9V2h3.500a2 2 0 0 1 .5 3.800L9 9H7L5.300 6H5v3z" fill="#1d5e86" /><path d="M3 10.800h6" stroke="#cfe0ea" /></svg>{n}</span></td>
                      <td className="border-r border-[#f0f4fb] p-0 pl-1 whitespace-nowrap">{d}</td><td className="p-0 pl-1 whitespace-nowrap">Autode</td>
                    </tr>
                  ))}
                  <tr><td className="border-r border-[#f0f4fb]" /><td className="border-r border-[#f0f4fb]" /><td /></tr>
                </tbody>
              </table>
            </div>
            <div className="flex h-[13px] items-center">
              <span className="flex w-[14px] justify-center"><Chevron dir="left" sw={1.600} size={8} /></span><div className="h-3 w-[242px] bg-[#cdcdcd]" />
              <span className="mr-1 ml-auto"><Chevron dir="right" sw={1.600} size={8} /></span>
            </div>
            <div className="mt-1.5 flex items-center">
              <label htmlFor="fname" className="w-[66px] pr-1 text-right whitespace-nowrap">Název souboru:</label>
              <div className="relative flex flex-1 items-center"><input id="fname" className="h-4 w-full border border-[#8a8a8a] bg-white px-1" /><span className="pointer-events-none absolute right-0.5"><Chevron color="#777" sw={1} /></span></div>
            </div>
            <div className="mt-1 flex items-center">
              <label htmlFor="ftype" className="w-[66px] pr-1 text-right whitespace-nowrap">Soubory typu:</label>
              <Combo id="ftype" boxClass="flex-1" className="border-[#b5b5b5] bg-[#e1e1e1] pl-0.5"><option>Projekty mračen bodů (*.rcp)</option></Combo>
            </div>
          </div>
        </div>
        <div className="mt-[17px] flex items-center justify-end">
          <label htmlFor="pos" className="pr-1">Pozice:</label>
          <div className="relative w-[160px]">
            <Combo id="pos" boxClass="w-full" className="border-[#3c8fd0] bg-[#cce4f7] pl-0.5"><option>Automaticky – střed na střed</option></Combo>
            <ul role="listbox" aria-label="Pozice" className="absolute top-4 left-0 w-full border border-[#555] bg-white text-[8px] leading-[11px] whitespace-nowrap shadow-[2px_2px_1px_rgba(0,0,0,0.4)] [font-family:'Noto_Sans',sans-serif]">
              <li role="option" aria-selected="true" className="bg-[#0078d7] pl-px text-white">Automaticky – střed na střed</li>
              <li role="option" aria-selected="false" className="pl-px">Automaticky – počátek k počátku</li>
              <li role="option" aria-selected="false" className="pl-px">Automaticky – podle sdílených souřadnic</li>
            </ul>
          </div>
        </div>
        <div className="mt-[45px] flex items-center">
          <button type="button" className="flex h-[18px] w-[68px] items-center justify-center border border-[#b5b5b5] bg-[#e1e1e1]"><span className="ml-1 flex-1"><u>N</u>ástroje</span><Caret className="mr-1 w-2" w={7} fill="#000" /></button>
          <button type="button" className="mr-[10px] ml-auto h-[18px] w-[74px] border border-[#b5b5b5] bg-[#e1e1e1]">Ot<u>e</u>vřít</button>
          <button type="button" className="mr-0.5 h-[18px] w-[74px] border border-[#b5b5b5] bg-[#e1e1e1]">Storno</button>
        </div>
      </div>
      <svg className="absolute right-0.5 bottom-0.5" width="8" height="8" viewBox="0 0 8 8" aria-hidden="true"><path d="M6 0h2v2H6zM3 3h2v2H3zM6 3h2v2H6zM0 6h2v2H0zM3 6h2v2H3zM6 6h2v2H6z" fill="#bdbdbd" /></svg>
    </div>
  );
}

export default function App() {
  return (
    <div className="relative flex h-screen flex-col overflow-hidden border-t border-l border-[#9c9c9c] bg-[#cbcbcb] text-[10px] leading-[14px] text-[#222] [font-family:Roboto,'Noto_Sans',sans-serif]">
      <TitleBar />
      <Tabs />
      <Ribbon />
      <div className="h-[21px] shrink-0 bg-[#eeeeee]" />
      <div className="flex min-h-0 flex-1 border-t-2 border-b border-[#cccccc]">
        <Browser />
        <Viewport />
        <Properties />
      </div>
      <StatusBar />
      <Dialog />
    </div>
  );
}
